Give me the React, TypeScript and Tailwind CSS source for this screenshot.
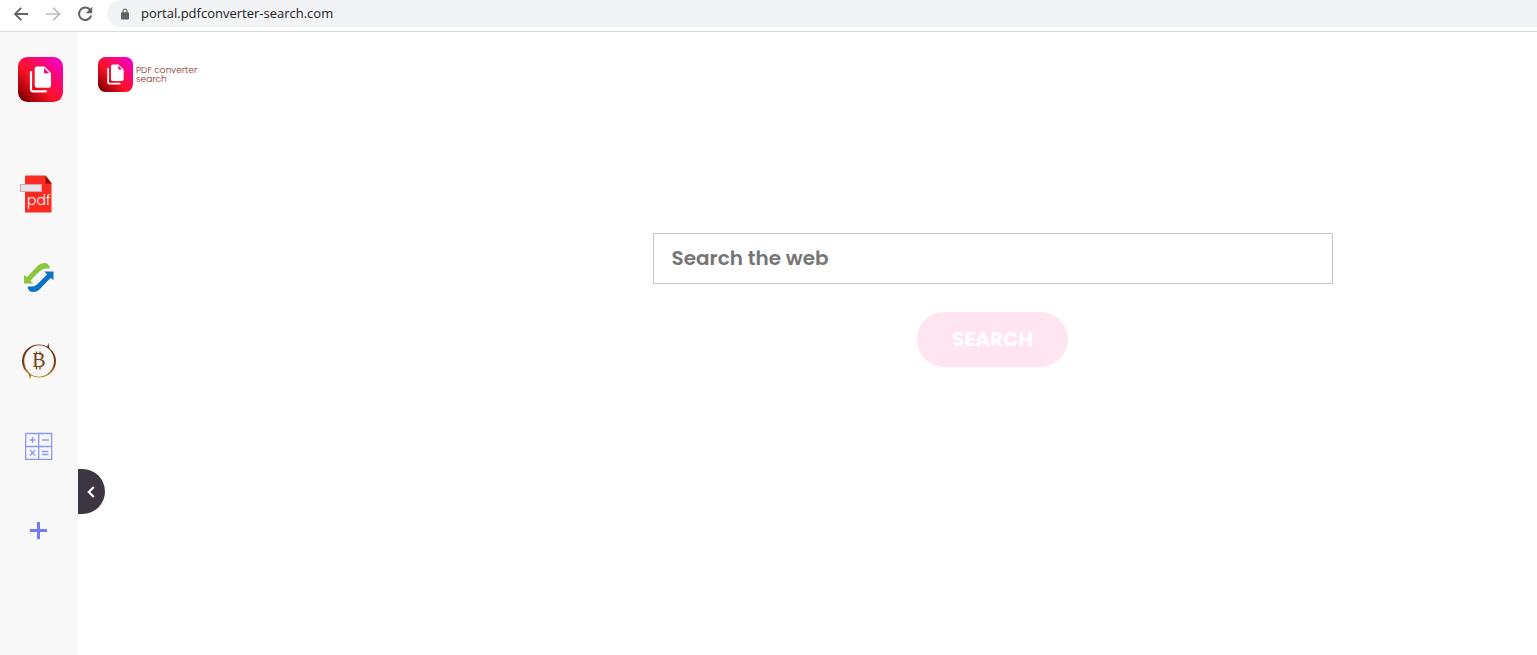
import { useState } from "react"

function DocsLogo({ id, className }: { id: string; className: string }) {
  return (
    <svg viewBox="0 0 45 45" className={className} aria-hidden="true">
      <defs>
        <linearGradient id={id} x1="0" y1="1" x2="1" y2="0">
          <stop offset="0.04" stopColor="#6a0000" />
          <stop offset="0.2" stopColor="#b00510" />
          <stop offset="0.42" stopColor="#fb1224" />
          <stop offset="0.62" stopColor="#fa0a5c" />
          <stop offset="0.9" stopColor="#f400c0" />
        </linearGradient>
      </defs>
      <rect width="45" height="45" rx="9.5" fill={`url(#${id})`} />
      <path d="M13 15v17.5a1.8 1.8 0 0 0 1.8 1.8H28" fill="none" stroke="#fff" strokeWidth="2.2" strokeLinecap="round" />
      <path d="M19 9.5h7.5l6.5 6.5v12.5a2.3 2.3 0 0 1-2.3 2.3H19a2.3 2.3 0 0 1-2.3-2.3V11.8A2.3 2.3 0 0 1 19 9.5z" fill="#fff" />
      <path d="M26 11v5.2h5.2z" fill="#f8087a" />
    </svg>
  )
}

function PdfIcon() {
  return (
    <svg viewBox="0 0 38 38" className="h-[38px] w-[38px]" aria-hidden="true">
      <path d="M5 .5h20.5l6 7.5v29.5H5z" fill="#fb2a22" />
      <path d="M25.5 .5l6 8h-6z" fill="#8e0b06" />
      <rect x="0.5" y="9.5" width="21" height="7" fill="#e6e6e8" stroke="#d8a0aa" />
      <text x="7" y="29.5" fontFamily="Poppins, sans-serif" fontSize="14" fontWeight="300" fill="#fff">
        pdf
      </text>
    </svg>
  )
}

function SyncIcon() {
  const arrow = "M0 12v8.5h9l-2.5-3L16 8q2.500-2.500 6-2.500h4Q25 0 20.500 0q-4 0-6.500 2.500L3 14z"
  return (
    <svg viewBox="0 0 30 30" className="h-[30px] w-[30px]" aria-hidden="true">
      <path d={arrow} fill="#8cc63f" />
      <path d={arrow} transform="rotate(180 14.75 14.5)" fill="#0b72c4" />
    </svg>
  )
}

function BitcoinIcon() {
  return (
    <svg viewBox="0 0 36 38" className="h-[38px] w-9" aria-hidden="true">
      <defs>
        <linearGradient id="coin" x1="0" y1="0" x2="0" y2="1">
          <stop offset="0" stopColor="#5f2c12" />
          <stop offset="0.6" stopColor="#7a4212" />
          <stop offset="1" stopColor="#c09a10" />
        </linearGradient>
      </defs>
      <path
        fillRule="evenodd"
        d="M18 1.500c3 0 6 .8 8.300 2.200L27.300 0l1.300 5.500C32.500 8.500 35 13 35 18c0 9.500-7.500 16.500-17 16.500-3 0-5.500-.7-7.800-2L9 36.500l-1.500-5.700C3.500 27.700 1 23.200 1 18 1 8.500 8.500 1.500 18 1.500zM18.300 2.300C10 2.300 3.200 9.500 3.200 18S9.700 33.700 18 33.700 33 26.500 33 18 26.500 2.300 18.300 2.300z"
        fill="url(#coin)"
      />
      <text x="18" y="24" textAnchor="middle" fontFamily="'Liberation Serif', serif" fontSize="20" fill="#7a3d12">
        B
      </text>
      <path d="M15.500 8.500v3M19 8.500v3M15.500 23.500v3M19 23.500v3" stroke="#7a3d12" strokeWidth="1.300" />
    </svg>
  )
}

function CalculatorIcon() {
  return (
    <svg viewBox="0 0 28 28" className="h-7 w-7" fill="none" stroke="#8f96fa" aria-hidden="true">
      <path d="M.7 1.500h26v26H.7zM13.700 1.500v26M.7 14.500h26" strokeWidth="1.300" />
      <path d="M4.500 8h6M7.500 5v6M17 8h7M5 18l5 5.500M10 18l-5 5.500M17 19.500h6.500M17 22.500h6.500" strokeWidth="1.300" />
    </svg>
  )
}

function PlusIcon() {
  return (
    <svg viewBox="0 0 18 18" className="h-[18px] w-[18px]" aria-hidden="true">
      <path d="M0 9.500h17M8.500 1v17" stroke="#6f7bf7" strokeWidth="3" />
    </svg>
  )
}

const shortcuts = [
  { label: "PDF tools", icon: <PdfIcon /> },
  { label: "Convert", icon: <SyncIcon /> },
  { label: "Crypto", icon: <BitcoinIcon /> },
  { label: "Calculator", icon: <CalculatorIcon /> },
  { label: "Add shortcut", icon: <PlusIcon /> },
]

function BrowserBar() {
  return (
    <header className="flex h-8 items-start border-b border-[#dadce0] bg-white">
      <nav className="flex h-[27px] items-center gap-4 pr-3.5 pl-[13px]">
        <button type="button" aria-label="Back">
          <svg viewBox="0 0 16 16" className="h-4 w-4" fill="none" stroke="#5f6368" strokeWidth="1.9" aria-hidden="true">
            <path d="M15 8H2.500M8.200 1.800L2 8l6.200 6.200" />
          </svg>
        </button>
        <button type="button" aria-label="Forward" disabled>
          <svg viewBox="0 0 16 16" className="h-4 w-4" fill="none" stroke="#babcbe" strokeWidth="1.7" aria-hidden="true">
            <path d="M1 8h13M8.300 1.800L14.500 8l-6.200 6.200" />
          </svg>
        </button>
        <button type="button" aria-label="Reload">
          <svg viewBox="0 0 16 16" className="h-4 w-4" aria-hidden="true">
            <path d="M13.300 4.200A6.200 6.200 0 1 0 14.200 9.500" fill="none" stroke="#5f6368" strokeWidth="2" />
            <path d="M15.200 .8v6.500H8.700z" fill="#5f6368" />
          </svg>
        </button>
      </nav>
      <div className="flex h-[27px] flex-1 items-center gap-3 rounded-l-full bg-[#f1f3f4] pl-3.5">
        <svg viewBox="0 0 8 12" className="h-3 w-2" aria-hidden="true">
          <path d="M2 5V3a2 2 0 0 1 4 0v2" fill="none" stroke="#5f6368" strokeWidth="1.2" />
          <rect y="4.3" width="8" height="7.2" rx="0.8" fill="#5f6368" />
        </svg>
        <input
          type="text"
          aria-label="Address"
          defaultValue="portal.pdfconverter-search.com"
          className="h-[18px] min-w-0 flex-1 bg-transparent font-['Open_Sans',sans-serif] text-[13px] text-[#202124] outline-none"
        />
      </div>
    </header>
  )
}

export default function App() {
  const [open, setOpen] = useState(true)
  const [query, setQuery] = useState("")

  return (
    <div className="flex min-h-screen flex-col bg-white font-[Poppins,Inter,sans-serif]">
      <BrowserBar />
      <div className="flex flex-1">
        {open && (
          <aside className="flex w-[78px] shrink-0 flex-col bg-[#f8f8f8] pt-[25px]">
            <a href="#" aria-label="Home" className="pl-[18px]">
              <DocsLogo id="side-logo" className="h-[45px] w-[45px]" />
            </a>
            <nav className="mt-[50px] flex flex-col">
              {shortcuts.map((item) => (
                <a
                  key={item.label}
                  href="#"
                  aria-label={item.label}
                  className="flex h-[84px] items-center justify-center"
                >
                  {item.icon}
                </a>
              ))}
            </nav>
          </aside>
        )}
        <main className="relative flex flex-1">
          <a href="#" className="flex w-[370px] shrink-0 items-start gap-[3px] pt-[25px] pl-5">
            <DocsLogo id="main-logo" className="h-[35px] w-[35px]" />
            <span className="pt-[9px] text-[9px] leading-[9px] font-light text-[#8f1a22]">
              PDF converter
              <br />
              search
            </span>
          </a>
          <form
            className="flex flex-1 flex-col items-center gap-7 pt-[201px]"
            onSubmit={(e) => e.preventDefault()}
          >
            <input
              type="text"
              aria-label="Search the web"
              placeholder="Search the web"
              value={query}
              onChange={(e) => setQuery(e.target.value)}
              className="h-[51px] w-full max-w-[680px] border border-[#c4c4c4] px-[18px] pb-0.5 text-[20px] font-semibold text-[#333] outline-none placeholder:text-[#757575]"
            />
            <button
              type="submit"
              className="h-[55px] w-[151px] rounded-full bg-[#ffe5f0] pb-0.5 text-[20px] font-bold text-white"
            >
              SEARCH
            </button>
          </form>
          <button
            type="button"
            aria-label="Toggle sidebar"
            onClick={() => setOpen(!open)}
            className="absolute top-[437px] left-0 flex h-[45px] w-[27px] items-center justify-center rounded-r-full bg-[#3d3542] pr-0.5"
          >
            <svg viewBox="0 0 8 12" className="h-3 w-2" fill="none" stroke="#fff" strokeWidth="2.2" aria-hidden="true">
              <path d="M6.800 1L1.800 6l5 5" />
            </svg>
          </button>
        </main>
      </div>
    </div>
  )
}
